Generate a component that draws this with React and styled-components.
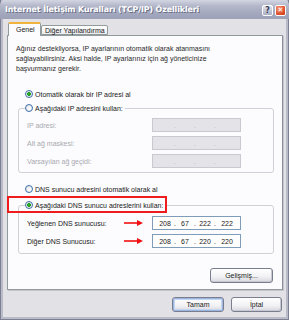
import styled, { createGlobalStyle } from "styled-components";

const GlobalStyle = createGlobalStyle`
  html, body {
    margin: 0;
    padding: 0;
    background: #ffffff;
    overflow: hidden;
  }
  body {
    font-family: "Liberation Sans", Arial, sans-serif;
  }
`;

function IpField({ value, disabled }) {
  const parts = value ? value.split(".") : ["", "", "", ""];
  return (
    <IpBox $disabled={disabled}>
      {parts.map((p, i) => (
        <IpPart key={i}>
          <IpNum>{p}</IpNum>
          {i < 3 && <IpDot>.</IpDot>}
        </IpPart>
      ))}
    </IpBox>
  );
}

function RedArrow() {
  return (
    <svg width="19" height="6" viewBox="0 0 19 6">
      <line x1="0" y1="3" x2="14" y2="3" stroke="#f01010" strokeWidth="1.6" />
      <polygon points="13,0 19,3 13,6" fill="#f01010" />
    </svg>
  );
}

export default function App() {
  return (
    <>
      <GlobalStyle />
      <Window>
        <TitleBar>
          <Title>Internet İletişim Kuralları (TCP/IP) Özellikleri</Title>
          <Caption>
            <CapButton>?</CapButton>
            <CapButton $close>✕</CapButton>
          </Caption>
        </TitleBar>
        <Body>
          <Tabs>
            <Tab $active>Genel</Tab>
            <Tab>Diğer Yapılandırma</Tab>
          </Tabs>
          <Panel>
            <Intro>
              Ağınız destekliyorsa, IP ayarlarının otomatik olarak atanmasını
              sağlayabilirsiniz. Aksi halde, IP ayarlarınız için ağ yöneticinize
              başvurmanız gerekir.
            </Intro>

            <RadioRow $top={14}>
              <Radio $checked />
              Otomatik olarak bir IP adresi al
            </RadioRow>

            <Group $top={2} $pad="4px 0 4px">
              <Legend>
                <Radio />
                Aşağıdaki IP adresini kullan:
              </Legend>
              <Fields>
                <Label $disabled>IP adresi:</Label>
                <IpField disabled />
                <Label $disabled>Alt ağ maskesi:</Label>
                <IpField disabled />
                <Label $disabled>Varsayılan ağ geçidi:</Label>
                <IpField disabled />
              </Fields>
            </Group>

            <RadioRow $top={10}>
              <Radio />
              DNS sunucu adresini otomatik olarak al
            </RadioRow>

            <Group $top={4} $pad="5px 0 5px">
              <Legend>
                <Highlight>
                  <Radio $checked />
                  Aşağıdaki DNS sunucu adreslerini kullan:
                </Highlight>
              </Legend>
              <Fields>
                <Label>
                  Yeğlenen DNS sunucusu:
                  <RedArrow />
                </Label>
                <IpField value="208.67.222.222" />
                <Label>
                  Diğer DNS Sunucusu:
                  <RedArrow />
                </Label>
                <IpField value="208.67.220.220" />
              </Fields>
            </Group>

            <PanelActions>
              <Button $w={63}>Gelişmiş...</Button>
            </PanelActions>
          </Panel>
          <Footer>
            <Button $w={52} $default>
              Tamam
            </Button>
            <Button $w={51}>İptal</Button>
          </Footer>
        </Body>
      </Window>
    </>
  );
}

const Window = styled.div`
  width: 289px;
  height: 320px;
  box-sizing: border-box;
  background: #e2e1e6;
  border: 1px solid #7d7f92;
  border-top: none;
  box-shadow: inset 2px 0 0 #b9bbc9, inset -2px 0 0 #b9bbc9, inset 0 -2px 0 #b9bbc9;
  display: flex;
  flex-direction: column;
`;

const TitleBar = styled.div`
  height: 19px;
  margin: 0 -1px;
  padding: 0 3px 0 5px;
  display: flex;
  align-items: center;
  justify-content: space-between;
  background: linear-gradient(#d3d6e2 0%, #b4b8ca 30%, #a3a8be 70%, #9ca1b8 100%);
  border-radius: 5px 5px 0 0;
`;

const Title = styled.span`
  font-family: "DejaVu Sans", Verdana, sans-serif;
  font-weight: bold;
  font-size: 7.9px;
  letter-spacing: -0.1px;
  color: #ffffff;
  text-shadow: 1px 1px 0 #6b7088;
  white-space: nowrap;
`;

const Caption = styled.div`
  display: flex;
  gap: 2px;
  padding-top: 1px;
`;

const CapButton = styled.div`
  width: 11px;
  height: 11px;
  box-sizing: border-box;
  border: 1px solid #ffffff;
  border-radius: 2px;
  display: flex;
  align-items: center;
  justify-content: center;
  font-family: "DejaVu Sans", sans-serif;
  font-weight: bold;
  font-size: ${(p) => (p.$close ? "7px" : "8px")};
  color: ${(p) => (p.$close ? "#ffffff" : "#3a3f5a")};
  background: ${(p) =>
    p.$close
      ? "radial-gradient(circle at 35% 30%, #f7a080, #e0502c 60%, #c8381a)"
      : "linear-gradient(#e4e6ee, #a8adc2)"};
`;

const Body = styled.div`
  flex: 1;
  padding: 3px 5px 0 6px;
  display: flex;
  flex-direction: column;
`;

const Tabs = styled.div`
  display: flex;
  align-items: flex-end;
  height: 13px;
  padding-left: 1px;
  position: relative;
  z-index: 1;
`;

const Tab = styled.div`
  font-size: 7px;
  color: #1a1a1a;
  white-space: nowrap;
  box-sizing: border-box;
  border: 1px solid #919b9c;
  border-bottom: ${(p) => (p.$active ? "none" : "1px solid #919b9c")};
  border-top: ${(p) => (p.$active ? "2px solid #f0b43c" : "1px solid #919b9c")};
  border-radius: 2px 2px 0 0;
  background: ${(p) => (p.$active ? "#fcfcfe" : "linear-gradient(#ffffff, #ececf0)")};
  height: ${(p) => (p.$active ? "14px" : "10px")};
  margin-bottom: ${(p) => (p.$active ? "-1px" : "0")};
  padding: ${(p) => (p.$active ? "0 7px" : "0 3px")};
  line-height: ${(p) => (p.$active ? "11px" : "9px")};
  width: ${(p) => (p.$active ? "33px" : "67px")};
`;

const Panel = styled.div`
  height: 255px;
  box-sizing: border-box;
  background: #fcfcfe;
  border: 1px solid #919b9c;
  border-right-color: #8a8f9a;
  box-shadow: 1px 1px 0 #c4c4cc;
  padding: 8px 8px 0 8px;
  display: flex;
  flex-direction: column;
`;

const Intro = styled.p`
  margin: 0;
  font-size: 7px;
  line-height: 10px;
  color: #2a2a2a;
  padding-right: 40px;
`;

const RadioRow = styled.div`
  margin-top: ${(p) => p.$top}px;
  padding-left: 9px;
  height: 12px;
  display: flex;
  align-items: center;
  gap: 2px;
  font-size: 7px;
  color: #1a1a1a;
  white-space: nowrap;
`;

const Radio = styled.span`
  width: 8px;
  height: 8px;
  flex: none;
  box-sizing: border-box;
  border-radius: 50%;
  border: 1px solid #3c6fa8;
  background: ${(p) =>
    p.$checked
      ? "radial-gradient(circle, #2fb52f 0, #1f9d1f 1.6px, #e8e8ee 2.2px, #ffffff 100%)"
      : "radial-gradient(circle at 60% 60%, #ffffff, #dedee6)"};
`;

const Group = styled.fieldset`
  margin: ${(p) => p.$top}px 0 0 2px;
  padding: ${(p) => p.$pad};
  border: 1px solid #d0d0d8;
  border-radius: 3px;
  min-width: 0;
`;

const Legend = styled.legend`
  margin-left: 6px;
  padding: 0 2px 0 0;
  height: 12px;
  display: flex;
  align-items: center;
  gap: 2px;
  font-size: 7px;
  color: #1a1a1a;
  white-space: nowrap;
  background: #fcfcfe;
`;

const Highlight = styled.span`
  position: relative;
  display: flex;
  align-items: center;
  gap: 2px;
  &::after {
    content: "";
    position: absolute;
    left: -18px;
    right: -4px;
    top: -5px;
    bottom: -4px;
    border: 2px solid #ee1c1c;
  }
`;

const Fields = styled.div`
  display: grid;
  grid-template-columns: 133px 89px;
  grid-auto-rows: 14px;
  row-gap: 4px;
  align-items: center;
`;

const Label = styled.div`
  padding: 0 9px 0 8px;
  display: flex;
  align-items: center;
  justify-content: space-between;
  font-size: 7px;
  color: ${(p) => (p.$disabled ? "#a8a8ae" : "#1a1a1a")};
  white-space: nowrap;
`;

const IpBox = styled.div`
  height: 14px;
  box-sizing: border-box;
  display: grid;
  grid-template-columns: repeat(4, 1fr);
  padding: 0 3px 0 4px;
  border: 1px solid ${(p) => (p.$disabled ? "#c9c9d2" : "#7f9db9")};
  background: ${(p) => (p.$disabled ? "#e4e3e8" : "#ffffff")};
  color: ${(p) => (p.$disabled ? "#b8b8c0" : "#222222")};
  font-size: 7px;
`;

const IpPart = styled.div`
  display: flex;
  align-items: center;
`;

const IpNum = styled.span`
  flex: 1;
  text-align: center;
`;

const IpDot = styled.span`
  width: 4px;
  text-align: center;
`;

const PanelActions = styled.div`
  margin-top: 14px;
  display: flex;
  justify-content: flex-end;
  padding-right: 1px;
`;

const Button = styled.button`
  width: ${(p) => p.$w}px;
  height: 15px;
  padding: 0;
  box-sizing: border-box;
  font-family: "Liberation Sans", Arial, sans-serif;
  font-size: 7px;
  color: #222222;
  border: 1px solid #7a7d8e;
  border-radius: 3px;
  background: linear-gradient(#ffffff, #f1f1f4 60%, #d6d6de);
  box-shadow: ${(p) => (p.$default ? "inset 0 0 0 1px #9cb6e0, inset 0 0 0 2px #c4d6f2" : "inset -1px -1px 0 #c8c8d2")};
`;

const Footer = styled.div`
  margin-top: 7px;
  display: flex;
  justify-content: flex-end;
  gap: 7px;
  padding-right: 1px;
`;
